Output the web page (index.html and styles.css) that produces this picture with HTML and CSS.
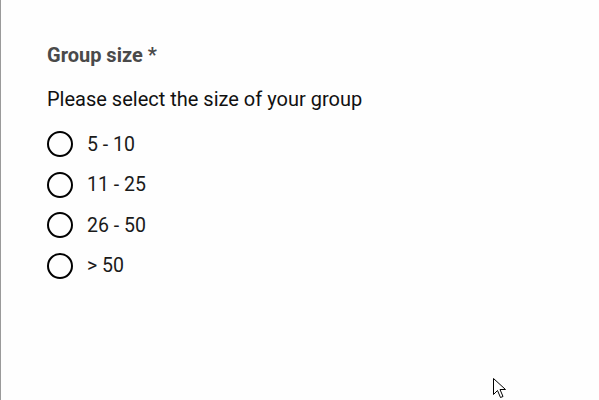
FILE: index.html
```html
<!DOCTYPE html>
<html>
<head>
<meta charset="utf-8">
<link rel="stylesheet" href="styles.css">
</head>
<body>
<div class="page">
  <div class="question">
    <div class="title">Group size *</div>
    <div class="desc">Please select the size of your group</div>
    <div class="options">
      <label class="opt"><span class="radio"></span><span class="lbl">5 - 10</span></label>
      <label class="opt"><span class="radio"></span><span class="lbl">11 - 25</span></label>
      <label class="opt"><span class="radio"></span><span class="lbl">26 - 50</span></label>
      <label class="opt"><span class="radio"></span><span class="lbl">&gt; 50</span></label>
    </div>
  </div>
  <svg class="cursor" width="14" height="22" viewBox="0 0 14 22">
    <path d="M0.5 0.5 L0.5 16.5 L4.5 12.5 L7.5 19.5 L10 18.5 L7 11.5 L12.5 11.5 Z" fill="#fff" stroke="#000" stroke-width="1"/>
  </svg>
</div>
</body>
</html>
```
FILE: styles.css
```css
html, body {
  margin: 0;
  padding: 0;
  background: #ffffff;
}
.page {
  position: relative;
  width: 598px;
  height: 400px;
  border-left: 1px solid #9a9a9a;
  background: #fefefe;
  font-family: Roboto, "Liberation Sans", sans-serif;
  overflow: hidden;
}
.question {
  padding: 44px 0 0 46px;
}
.title {
  font-weight: 700;
  font-size: 20px;
  color: #4a4a4a;
  line-height: 22px;
}
.desc {
  margin-top: 22px;
  font-size: 20px;
  color: #111;
  line-height: 22px;
}
.options {
  margin-top: 21px;
  display: flex;
  flex-direction: column;
  gap: 14.5px;
}
.opt {
  display: flex;
  align-items: center;
  gap: 14px;
  height: 26px;
}
.radio {
  box-sizing: border-box;
  width: 26px;
  height: 26px;
  border: 2px solid #000;
  border-radius: 50%;
}
.lbl {
  font-size: 19.5px;
  color: #1a1a1a;
}
.cursor {
  position: absolute;
  left: 492px;
  top: 378px;
}
```
